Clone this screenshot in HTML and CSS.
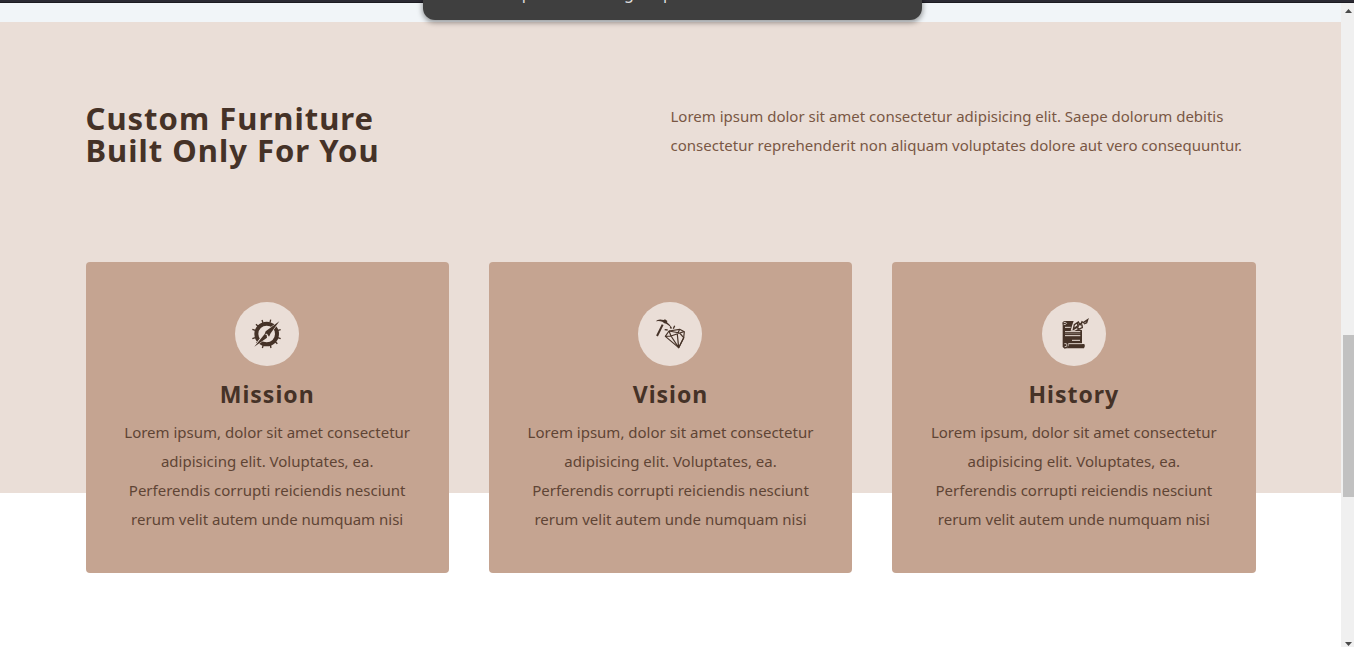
FILE: index.html
```
<!DOCTYPE html>
<html lang="en">
<head>
<meta charset="utf-8">
<meta name="viewport" content="width=device-width, initial-scale=1">
<title>Custom Furniture</title>
<link rel="stylesheet" href="styles.css">
</head>
<body>
<div class="topbar"></div>
<div class="toast" role="status">You can paste the image clip</div>
<div class="view">
  <main class="page">
    <section class="services">
      <div class="section-center">
        <header class="header">
          <h2 class="title">Custom Furniture<br>Built Only For You</h2>
          <p class="lead">Lorem ipsum dolor sit amet consectetur adipisicing elit. Saepe dolorum debitis consectetur reprehenderit non aliquam voluptates dolore aut vero consequuntur.</p>
        </header>
        <div class="cards">
          <article class="card">
            <span class="icon">
              <svg viewBox="63 60 96 96" aria-hidden="true">
                <circle cx="110" cy="108" r="31" fill="none" stroke="currentColor" stroke-width="12"/>
                <g stroke="currentColor" stroke-width="4">
                  <path d="M99 75l-3-9M120 74l2-9M84 85l-6-6M76 97l-9-3M76 119l-9 3M84 131l-5 5M100 141l-3 9M121 141l2 9M136 131l6 6M143 119l9 3M144 97l8-2"/>
                </g>
                <path d="M146 72l-38 28-6 8-27 36 37-26 7-9z" fill="#eaded7" stroke="#eaded7" stroke-width="4"/>
                <path d="M148 70l-41 30-3 8 7-1 6 9 5-10zM104 108l-31 38 38-27-1-8z" fill="currentColor"/>
              </svg>
            </span>
            <h3 class="card-title">Mission</h3>
            <p class="card-text">Lorem ipsum, dolor sit amet consectetur adipisicing elit. Voluptates, ea. Perferendis corrupti reiciendis nesciunt rerum velit autem unde numquam nisi</p>
          </article>
          <article class="card">
            <span class="icon">
              <svg viewBox="63 60 96 96" aria-hidden="true">
                <path d="M68 70q8-9 24-4l4-2 7 5-1 4q11 8 15 19-12-14-23-16l-6-5q-10-4-20-1z" fill="currentColor"/>
                <path d="M89 80l-17 34" stroke="currentColor" stroke-width="6"/>
                <path d="M95 95l9 1M112 86l3 6M125 83l-4 9" stroke="currentColor" stroke-width="4"/>
                <g fill="none" stroke="currentColor" stroke-width="3.5" stroke-linejoin="round">
                  <path d="M97 115l11-16 32-5 14 7-2 19-15 29z"/>
                  <path d="M97 115l17-1 26-9 13-4M108 99l6 15 23 35-4-40 7-15M108 99l32 6M137 149l15-30-12-14"/>
                </g>
              </svg>
            </span>
            <h3 class="card-title">Vision</h3>
            <p class="card-text">Lorem ipsum, dolor sit amet consectetur adipisicing elit. Voluptates, ea. Perferendis corrupti reiciendis nesciunt rerum velit autem unde numquam nisi</p>
          </article>
          <article class="card">
            <span class="icon">
              <svg viewBox="63 60 96 96" aria-hidden="true">
                <path d="M84 69h26l-5 14-4 15 12 0 10-5 10 3 2 1v40H94l-2 12-9 3-6-5V82l-1-8q2-5 8-5z" fill="currentColor"/>
                <path d="M95 138h47q4 6-1 13H87q8-3 8-13z" fill="currentColor"/>
                <path d="M80 74l6-1q5 3 0 6l-6 1M82 137q8-2 8 4t-7 5M94 137h42" fill="none" stroke="#eaded7" stroke-width="2.5"/>
                <path d="M84 88h17M84 101h46M84 113h46M105 127h24" stroke="#eaded7" stroke-width="3"/>
                <path d="M84 107h46" stroke="#eaded7" stroke-opacity="0.5" stroke-width="2"/>
                <g fill="none" stroke="currentColor" stroke-width="4">
                  <path d="M109 94l3-14 12-8 5 8 6 1 1 8-10 4-7-5-9 6zM113 90l22-16M121 74l3 14"/>
                  <path d="M132 79l3-8 6 4M140 73l12-8-3 9-8 4"/>
                </g>
              </svg>
            </span>
            <h3 class="card-title">History</h3>
            <p class="card-text">Lorem ipsum, dolor sit amet consectetur adipisicing elit. Voluptates, ea. Perferendis corrupti reiciendis nesciunt rerum velit autem unde numquam nisi</p>
          </article>
        </div>
      </div>
    </section>
  </main>
  <div class="scrollbar" aria-hidden="true">
    <svg class="arrow" viewBox="0 0 7 4"><path d="M0 4L3.5 0 7 4z"/></svg>
    <div class="thumb"></div>
    <svg class="arrow" viewBox="0 0 7 4"><path d="M0 0L3.5 4 7 0z"/></svg>
  </div>
</div>
</body>
</html>
```
FILE: styles.css
```
* { box-sizing: border-box; margin: 0; padding: 0; }

body {
  display: flex;
  flex-direction: column;
  height: 100vh;
  overflow: hidden;
  background: #fff;
  color: #453227;
  font-family: "Noto Sans", sans-serif;
  font-size: 15px;
}

.topbar { height: 3px; flex: none; background: #2b2a33; border-bottom: 1px solid #1c1b22; }

.toast {
  position: absolute;
  top: -60px;
  left: calc(50% - 254px);
  width: 499px;
  height: 80px;
  padding: 43px 36px 0;
  border-radius: 0 0 12px 12px;
  background: #3f3f3f;
  box-shadow: 0 2px 5px 1px rgba(0, 0, 0, 0.35);
  color: #ddd;
  font-size: 16px;
  line-height: 20px;
  z-index: 1;
}

.view { display: flex; flex: 1; min-height: 0; }

.page { flex: 1; border-top: 19px solid #f1f5f8; }

.services { height: 471px; background: #eaded7; }

.section-center { width: 90%; max-width: 1170px; margin: 0 auto; padding-top: 80px; }

.header { display: grid; grid-template-columns: 1fr 1fr; height: 160px; }

.title { font-size: 31px; line-height: 32px; letter-spacing: 1px; }

.lead { color: #795744; line-height: 29px; }

.cards { display: grid; grid-template-columns: repeat(3, 1fr); gap: 40px; }

.card {
  padding: 40px 36px 39px;
  border-radius: 4px;
  background: #c5a491;
  text-align: center;
}

.icon {
  display: grid;
  place-items: center;
  width: 64px;
  height: 64px;
  margin: 0 auto 16px;
  border-radius: 50%;
  background: #eaded7;
}

.icon svg { width: 32px; height: 32px; }

.card-title { margin-bottom: 12px; font-size: 23px; line-height: 24px; letter-spacing: 1px; }

.card-text { color: #5f4435; line-height: 29px; }

.scrollbar {
  display: flex;
  flex-direction: column;
  flex: none;
  width: 13px;
  padding: 6px 0 1px 2px;
  background: #f0f0f0;
}

.arrow { flex: none; width: 7px; height: 4px; margin-left: 2px; fill: #4a4a4a; }

.thumb { height: 162px; margin: 322px 0 auto; background: #c1c1c1; }
```
